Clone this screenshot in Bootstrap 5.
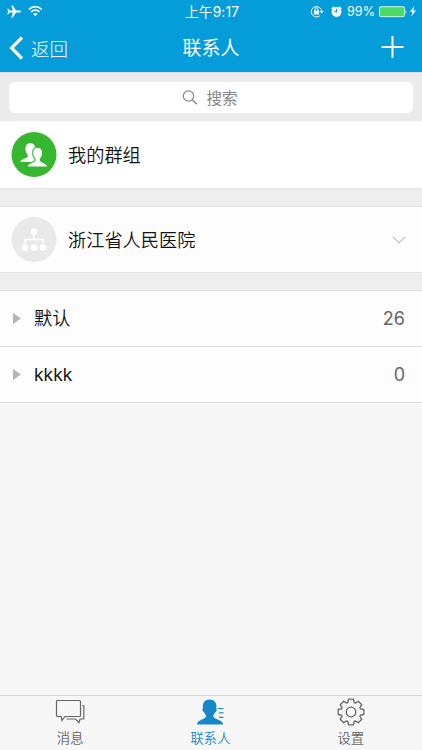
<!DOCTYPE html>
<html lang="zh-CN">
<head>
<meta charset="utf-8">
<meta name="viewport" content="width=device-width, initial-scale=1">
<title>联系人</title>
<link href="https://cdn.jsdelivr.net/npm/bootstrap@5.3.0/dist/css/bootstrap.min.css" rel="stylesheet">
<style>
body{font-family:"Noto Sans CJK SC",sans-serif;background:#f7f7f7;color:#111;height:750px;overflow:hidden}
svg{display:block;flex:none}
.topbar{background:#049cd9;height:72px}
.status{height:24px;font:12.6px/24px Inter,"Noto Sans CJK SC",sans-serif;padding:0 5px 0 7px}
.status>*{flex:1 1 0}
.clock{font-size:13.8px;letter-spacing:.1px}
.titles{height:48px;font-size:19px;line-height:46px;padding:0 17px 0 9px}
.titles>*{flex:1 1 0}
.back{font-size:18.5px;font-weight:300}
.back span,.tabs span{margin-top:-1px}
.search-area{background:#ebebeb;height:49px;padding:9px;border-top:1px solid #dedede}
.search-field{background:#fff;height:31px;border-radius:6px;color:#858585;font-size:15.5px;line-height:29px;padding-right:2px}
.entry{height:67px;padding:0 16px 0 11px;font-size:18.2px;font-weight:350;background:#fff}
.strip{height:19px;background:#eee;border-top:1px solid #e5e5e5;border-bottom:1px solid #e2e2e2}
.org{background:#fdfdfd;height:65px}
.fold{height:56px;background:#fdfdfd;border-bottom:1px solid #e0e0e0;padding:0 17px 0 12px;font-size:18.2px;font-weight:350}
.fold .name{margin-top:-1px}
.fold .latin{font-family:Inter,sans-serif;font-size:17.5px;font-weight:400;margin-top:1px}
.total{font:18px Inter,sans-serif;color:#666}
.tabs{height:55px;background:#f7f7f7;border-top:1px solid #d9d9d9;font-size:13.3px;line-height:17px;color:#666;font-weight:350;padding-right:1px}
.tabs .on{color:#1688c7}
</style>
<script src="https://cdn.jsdelivr.net/npm/bootstrap@5.3.0/dist/js/bootstrap.bundle.min.js"></script>
</head>
<body class="d-flex flex-column">
<header class="topbar text-white flex-shrink-0">
  <div class="status d-flex align-items-center">
    <div class="d-flex align-items-center">
      <svg width="36" height="24" viewBox="7 0 36 24"><path fill="#fff" d="M21 11.500c0 .8-1 1.100-2 1.100h-3l-3.200 5h-1.500l1.600-5h-3.100l-1.300 1.700H7.300l.8-2.800-.8-2.800h1.200l1.300 1.700h3.100l-1.600-5h1.500l3.200 5h3c1 0 2 .3 2 1.100z"/><g fill="none" stroke="#fff" stroke-width="1.700"><path d="M28.900 9.300q6.400-5.300 12.800 0M31.100 11.900q4.200-3.400 8.400 0"/></g><path fill="#fff" d="M33 13.800q2.300-1.700 4.600 0l-2.300 2.500z"/></svg>
    </div>
    <div class="clock text-center">上午9:17</div>
    <div class="d-flex justify-content-end align-items-center">
      <svg width="33" height="24" viewBox="309 0 33 24"><g fill="none" stroke="#fff"><path d="M318.800 15.800a5.200 5.200 0 1 1 1.900-4.300M314 10.800V9.300a1.500 1.500 0 0 1 3 0v1.500"/></g><path fill="#fff" d="M312.900 10.500h5.200v3.900h-5.200zM318.500 11h4.300l-2.100 2.600z"/><circle cx="335.500" cy="12" r="4.900" fill="#fff"/><path d="M330.700 9l2.300-2.200M340.300 9L338 6.800" stroke="#fff" stroke-width="1.500"/><path d="M333 11l2.500 1.300V8.800" fill="none" stroke="#049cd9"/></svg>
      <span class="ms-1 me-1">99%</span>
      <svg width="38" height="24" viewBox="379 0 38 24"><rect x="379.500" y="6.700" width="25" height="10" rx="1.500" fill="#4cd964" stroke="#c9f4ed"/><path fill="#e2f8fa" d="M405.500 9.500q1.800 2.200 0 4.500z"/><path fill="#fff" d="M414.200 6l-4.200 6h2.500l-1.200 4.500 4.700-6h-2.700z"/></svg>
    </div>
  </div>
  <div class="titles d-flex">
    <div class="back d-flex align-items-center"><svg class="me-2" width="14" height="24" viewBox="0 0 14 24"><path d="M13 1.500L2.600 12 13 22.500" fill="none" stroke="#fff" stroke-width="3.200"/></svg><span>返回</span></div>
    <div class="text-center ps-2">联系人</div>
    <div class="d-flex justify-content-end align-items-center"><svg width="24" height="24" viewBox="0 0 24 24"><path d="M11.500 0v22M.5 11h22" stroke="#fff" stroke-width="2"/></svg></div>
  </div>
</header>
<main class="flex-grow-1">
  <div class="search-area"><div class="search-field d-flex justify-content-center align-items-center"><svg width="16" height="16" viewBox="0 0 16 16" fill="none" stroke="#858585" stroke-width="1.200"><circle cx="6.500" cy="6" r="5.200"/><path d="M10.200 9.700l4.800 4.500" stroke-width="1.500"/></svg><span class="ms-2">搜索</span></div></div>
  <div class="entry d-flex align-items-center">
    <svg width="45" height="45" viewBox="-.5 0 45 45" overflow="visible"><circle cx="22.500" cy="22.500" r="22.500" fill="#36b72f"/><g fill="#fff"><path d="M9 30c0-2.800 5.500-3.300 7.300-5.300.4-.9-.2-1.900-.9-3-1.200-1.800-1.800-4-1.400-6.200.4-3 2.100-4.300 4.800-4.300s4.600 1.300 5 4.300c.3 2.200-.3 4.400-1.500 6.200-.7 1.100-1.200 2.100-.8 3 1.200 2 6.600 2.200 6.600 5.300z"/><path d="M15.500 35c.3-3.800 6-4.300 7.900-6.400.5-.9 0-1.700-.7-2.700-1.300-1.900-1.900-4-1.500-6.200.5-3 2.200-4.500 4.900-4.500s4.500 1.500 4.900 4.500c.4 2.200-.2 4.300-1.500 6.200-.7 1-1.200 1.800-.7 2.700 1.500 2.100 7.300 2.600 7.600 6.400z" stroke="#36b72f" stroke-width="1.100"/></g></svg>
    <span class="ms-2 ps-1">我的群组</span>
  </div>
  <div class="strip"></div>
  <div class="entry org d-flex align-items-center">
    <svg width="45" height="45" viewBox="-.5 0 45 45" overflow="visible"><circle cx="22.500" cy="22.500" r="22.500" fill="#e9e9e9"/><g fill="#fff"><circle cx="22.500" cy="14.500" r="3.300"/><circle cx="13.500" cy="30.500" r="3.300"/><circle cx="22.500" cy="30.500" r="3.300"/><circle cx="31.500" cy="30.500" r="3.300"/></g><path d="M22.500 17v5M13.500 26v-3.500h18V26" fill="none" stroke="#fff" stroke-width="1.500"/></svg>
    <span class="ms-2 ps-1">浙江省人民医院</span>
    <svg class="ms-auto" width="14" height="8" viewBox="0 0 14 8"><path d="M1 1l6 6 6-6" fill="none" stroke="#c4c4c4" stroke-width="1.200"/></svg>
  </div>
  <div class="strip"></div>
  <div class="fold d-flex align-items-center"><svg width="10" height="12" viewBox="0 0 10 12"><path d="M1 0L9 5.500l-8 5.500z" fill="#b4b4b4"/></svg><span class="name ms-2 ps-1">默认</span><span class="total ms-auto">26</span></div>
  <div class="fold d-flex align-items-center"><svg width="10" height="12" viewBox="0 0 10 12"><path d="M1 0L9 5.500l-8 5.500z" fill="#b4b4b4"/></svg><span class="latin ms-2 ps-1">kkkk</span><span class="total ms-auto">0</span></div>
</main>
<nav class="tabs row g-0 text-center flex-shrink-0">
  <div class="col-4 d-flex flex-column align-items-center"><svg width="32" height="34" viewBox="54 696 32 34" fill="none" stroke="#666" stroke-width="1.200"><path d="M57.500 700.500h22q1 0 1 1v14q0 1-1 1H65l-3 4-.8-4h-3.700q-1 0-1-1v-14q0-1 1-1z"/><path d="M82.500 705.500h1.300V719H80l-1 3.500-3.500-3.500H66.500"/></svg><span>消息</span></div>
  <div class="col-4 on d-flex flex-column align-items-center"><svg width="32" height="34" viewBox="194 696 32 34"><path fill="#1688c7" d="M197 724.500c0-5 7.500-4.500 9-8 .3-1.200-.8-2.200-1.700-3.700-1.600-1-2.300-3.600-1.400-4.800-.6-5.200 2-8.500 6.600-8.500s7.600 3.200 6.800 8.500c.9 1.200.3 3.700-1.400 4.800-.8 1.500-1.900 2.500-1.600 3.700 1.600 3.500 9.700 3 9.700 8z"/><path d="M218 708.500h5.500M219 712.900h4.500M219 717.400h4.500" stroke="#1688c7" stroke-width="1.200"/></svg><span>联系人</span></div>
  <div class="col-4 d-flex flex-column align-items-center"><svg width="32" height="34" viewBox="-16 -16 32 34" fill="none" stroke="#666" stroke-width="1.300" stroke-linejoin="round"><path d="M-3.200-9.400L-2.500-12.800H2.500L3.200-9.400 4.400-8.900 7.300-10.800 10.800-7.300 8.900-4.400 9.400-3.200 12.800-2.500V2.500L9.400 3.200 8.900 4.400 10.800 7.300 7.300 10.800 4.400 8.900 3.200 9.400 2.500 12.800H-2.500L-3.200 9.400-4.400 8.900-7.300 10.800-10.800 7.300-8.900 4.400-9.400 3.200-12.800 2.500V-2.500L-9.400-3.200-8.900-4.400-10.800-7.300-7.300-10.800-4.400-8.900z"/><circle r="4.800"/></svg><span>设置</span></div>
</nav>
</body>
</html>
